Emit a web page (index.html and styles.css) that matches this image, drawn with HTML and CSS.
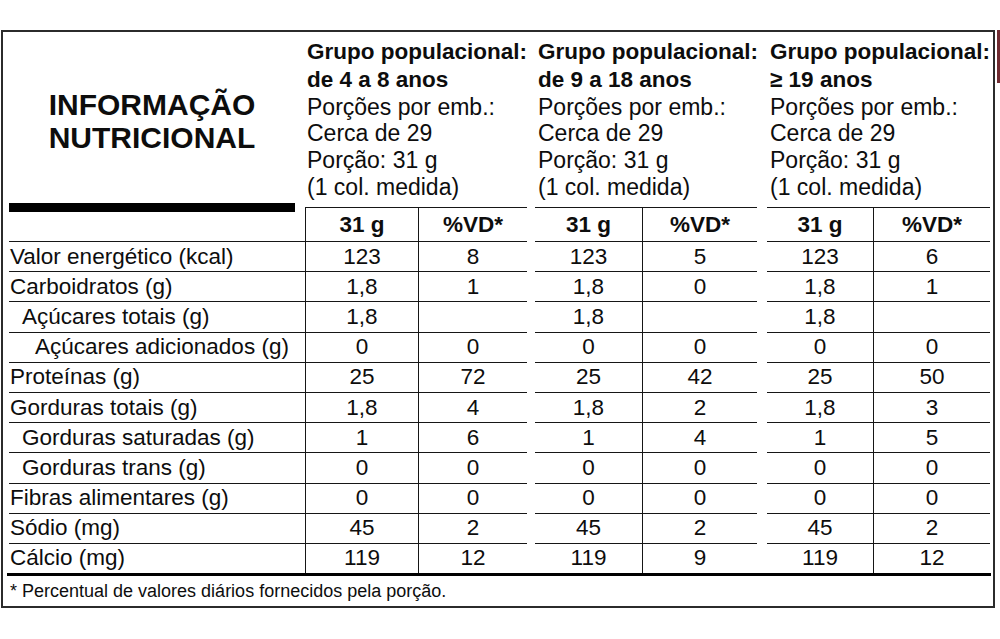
FILE: index.html
```html
<!DOCTYPE html>
<html lang="pt-BR">
<head>
<meta charset="utf-8">
<title>Informação Nutricional</title>
<link rel="stylesheet" href="styles.css">
</head>
<body>
<div class="panel">
  <div class="grid">
    <div class="title">INFORMAÇÃO<br>NUTRICIONAL</div>
    <div class="grp g1"><b>Grupo populacional:</b><br><b>de 4 a 8 anos</b><br>Porções por emb.:<br>Cerca de 29<br>Porção: 31 g<br>(1 col. medida)</div>
    <div class="sp"></div>
    <div class="grp"><b>Grupo populacional:</b><br><b>de 9 a 18 anos</b><br>Porções por emb.:<br>Cerca de 29<br>Porção: 31 g<br>(1 col. medida)</div>
    <div class="sp"></div>
    <div class="grp"><b>Grupo populacional:</b><br><b>≥ 19 anos</b><br>Porções por emb.:<br>Cerca de 29<br>Porção: 31 g<br>(1 col. medida)</div>

    <div class="hl"><div class="bar"></div></div>
    <div class="c first hd">31 g</div><div class="c b hd">%VD*</div><div class="sp"></div>
    <div class="c hd">31 g</div><div class="c b hd">%VD*</div><div class="sp"></div>
    <div class="c hd">31 g</div><div class="c b hd">%VD*</div>

    <div class="c l">Valor energético (kcal)</div>
    <div class="c first">123</div><div class="c b">8</div><div class="sp"></div>
    <div class="c">123</div><div class="c b">5</div><div class="sp"></div>
    <div class="c">123</div><div class="c b">6</div>

    <div class="c l">Carboidratos (g)</div>
    <div class="c first">1,8</div><div class="c b">1</div><div class="sp"></div>
    <div class="c">1,8</div><div class="c b">0</div><div class="sp"></div>
    <div class="c">1,8</div><div class="c b">1</div>

    <div class="c l i1">Açúcares totais (g)</div>
    <div class="c first">1,8</div><div class="c b"></div><div class="sp"></div>
    <div class="c">1,8</div><div class="c b"></div><div class="sp"></div>
    <div class="c">1,8</div><div class="c b"></div>

    <div class="c l i2">Açúcares adicionados (g)</div>
    <div class="c first">0</div><div class="c b">0</div><div class="sp"></div>
    <div class="c">0</div><div class="c b">0</div><div class="sp"></div>
    <div class="c">0</div><div class="c b">0</div>

    <div class="c l">Proteínas (g)</div>
    <div class="c first">25</div><div class="c b">72</div><div class="sp"></div>
    <div class="c">25</div><div class="c b">42</div><div class="sp"></div>
    <div class="c">25</div><div class="c b">50</div>

    <div class="c l">Gorduras totais (g)</div>
    <div class="c first">1,8</div><div class="c b">4</div><div class="sp"></div>
    <div class="c">1,8</div><div class="c b">2</div><div class="sp"></div>
    <div class="c">1,8</div><div class="c b">3</div>

    <div class="c l i1">Gorduras saturadas (g)</div>
    <div class="c first">1</div><div class="c b">6</div><div class="sp"></div>
    <div class="c">1</div><div class="c b">4</div><div class="sp"></div>
    <div class="c">1</div><div class="c b">5</div>

    <div class="c l i1">Gorduras trans (g)</div>
    <div class="c first">0</div><div class="c b">0</div><div class="sp"></div>
    <div class="c">0</div><div class="c b">0</div><div class="sp"></div>
    <div class="c">0</div><div class="c b">0</div>

    <div class="c l">Fibras alimentares (g)</div>
    <div class="c first">0</div><div class="c b">0</div><div class="sp"></div>
    <div class="c">0</div><div class="c b">0</div><div class="sp"></div>
    <div class="c">0</div><div class="c b">0</div>

    <div class="c l">Sódio (mg)</div>
    <div class="c first">45</div><div class="c b">2</div><div class="sp"></div>
    <div class="c">45</div><div class="c b">2</div><div class="sp"></div>
    <div class="c">45</div><div class="c b">2</div>

    <div class="c l">Cálcio (mg)</div>
    <div class="c first">119</div><div class="c b">12</div><div class="sp"></div>
    <div class="c">119</div><div class="c b">9</div><div class="sp"></div>
    <div class="c">119</div><div class="c b">12</div>
  </div>
  <div class="thick"></div>
  <div class="foot">* Percentual de valores diários fornecidos pela porção.</div>
</div>
<div class="strip"></div>
</body>
</html>
```
FILE: styles.css
```css
* { box-sizing: border-box; }

body {
  margin: 0;
  background: #fff;
  color: #0d0d0d;
  font-family: "Liberation Sans", Arial, sans-serif;
  display: flex;
  align-items: flex-start;
}

.panel {
  margin: 30px 0 0 1px;
  width: 994px;
  height: 578px;
  border: 2px solid #2b2b2b;
  padding: 0 3px 0 6px;
}

.grid {
  display: grid;
  grid-template-columns: 296px 113px 109px 8px 107px 115px 10px 106px 117px;
  grid-template-rows: 175px 34px repeat(11, 30.2px);
}

.title {
  font-weight: 700;
  font-size: 30px;
  line-height: 33px;
  text-align: center;
  padding: 56px 10px 0 0;
}

.grp {
  grid-column: span 2;
  font-size: 23px;
  line-height: 26.8px;
  padding: 6px 0 0 3px;
  white-space: nowrap;
}

.grp b { font-size: 22.5px; }

.grp.g1 { padding-left: 2px; }

.c {
  border-top: 1px solid #161616;
  display: flex;
  align-items: center;
  justify-content: center;
  font-size: 22.5px;
  white-space: nowrap;
}

.l { justify-content: flex-start; padding-left: 1px; }
.i1 { padding-left: 13px; }
.i2 { padding-left: 26px; }

.first, .b { border-left: 1px solid #161616; }

.hd { font-weight: 700; }

.bar {
  height: 9px;
  margin: -4px 10px 0 0;
  background: #000;
}

.thick {
  height: 3px;
  width: 984px;
  margin-left: -2px;
  background: #000;
}

.foot {
  font-size: 18px;
  line-height: 30px;
  padding-left: 1px;
}

.strip {
  width: 3px;
  height: 53px;
  margin: 30px 0 0 2px;
  background: #6f2b31;
}
```
